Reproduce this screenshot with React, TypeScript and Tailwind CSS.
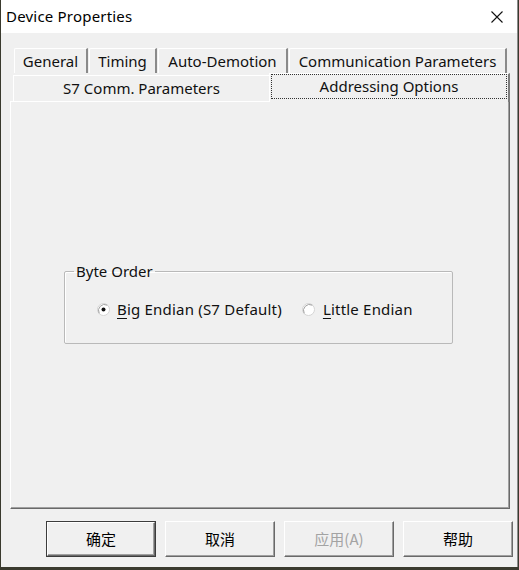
import React from 'react';

const font = { fontFamily: '"Noto Sans", "Noto Sans CJK SC", sans-serif' };
const cjk = { fontFamily: '"Noto Sans CJK SC", "Noto Sans", sans-serif' };

// classic raised 3D edge
const raised =
  'border-t border-l border-t-white border-l-white border-r border-b border-r-[#696969] border-b-[#696969] shadow-[inset_-1px_-1px_0_#a0a0a0]';

const Tab = ({ label, width, className = '' }: { label: string; width: number; className?: string }) => (
  <div
    className={`flex items-center justify-center border-t border-l border-t-white border-l-white border-r-2 border-r-[#8a8a8a] rounded-tl-[2px] ${className}`}
    style={{ width }}
  >
    {label}
  </div>
);

const Radio = ({ checked }: { checked?: boolean }) => (
  <svg width="13" height="13" viewBox="0 0 13 13" className="shrink-0">
    <circle cx="6.5" cy="6.5" r="6" fill="#ffffff" stroke="#d4d4d4" />
    <path d="M2.2 10.3 A6 6 0 0 1 10.3 2.2" fill="none" stroke="#a0a0a0" />
    {checked && <circle cx="6.5" cy="6.5" r="2" fill="#111" />}
  </svg>
);

const Button = ({ label, primary, disabled }: { label: string; primary?: boolean; disabled?: boolean }) => (
  <div
    className={`w-[110px] h-[36px] ${primary ? 'border border-[#3c3c3c] p-0' : ''}`}
  >
    <div
      className={`w-full h-full flex items-center justify-center text-[15px] ${raised} ${disabled ? 'text-[#a3a3a3]' : 'text-black'}`}
      style={cjk}
    >
      {label}
    </div>
  </div>
);

export default function App() {
  return (
    <div className="w-[519px] h-[570px] bg-[#3a3a2e] flex" style={font}>
      <div className="ml-[1px] w-[517px] h-[567px] flex flex-col border-r border-[#8c8c8c]">
        {/* Title bar */}
        <div className="h-[33px] bg-white flex items-center justify-between pl-[5px] pr-[14px]">
          <span className="text-[15px] text-black leading-none tracking-[0.2px]">Device Properties</span>
          <svg width="12" height="12" viewBox="0 0 12 12">
            <path d="M0.5 0.5 L11.5 11.5 M11.5 0.5 L0.5 11.5" stroke="#111" strokeWidth="1.1" />
          </svg>
        </div>

        {/* Body */}
        <div className="flex-1 bg-[#f0f0f0] flex flex-col text-[15px] text-[#111]">
          {/* Tab row 1 */}
          <div className="flex gap-[1px] pl-[13px] mt-[15px] h-[25px]">
            <Tab label="General" width={74} />
            <Tab label="Timing" width={68} />
            <Tab label="Auto-Demotion" width={130} />
            <Tab label="Communication Parameters" width={218} />
          </div>
          {/* Tab row 2 */}
          <div className="flex pl-[12px] h-[28px] items-end">
            <div className="w-[256px] h-[26px] flex items-center justify-center border-t border-l border-t-white border-l-white">
              S7 Comm. Parameters
            </div>
            <div className="relative z-10 w-[241px] h-[29px] -mb-[1px] px-[1px] pt-[1px] pb-[2px] bg-[#f0f0f0] border-t border-l border-t-white border-l-white border-r-2 border-r-[#7c7c7c]">
              <div className="h-full flex items-center justify-center border border-dotted border-[#333] -mt-[1px]">
                Addressing Options
              </div>
            </div>
          </div>

          {/* Panel */}
          <div className="ml-[9px] w-[500px] h-[408px] border-t border-l border-t-white border-l-white border-r border-b border-r-[#696969] border-b-[#696969] shadow-[inset_-1px_-1px_0_#a0a0a0] pt-[160px] pl-[53px]">
            <fieldset className="w-[389px] h-[82px] border border-[#b9b9b9] shadow-[inset_1px_1px_0_#ffffff] rounded-[2px] m-0 px-[10px]">
              <legend className="px-[2px] -ml-[1px] text-[15px] leading-[18px]">Byte Order</legend>
              <div className="flex items-center mt-[18px] ml-[22px] tracking-[0.2px]">
                <Radio checked />
                <span className="ml-[7px]">
                  <span className="underline underline-offset-[3px]">B</span>ig Endian (S7 Default)
                </span>
                <span className="ml-[20px]">
                  <Radio />
                </span>
                <span className="ml-[8px]">
                  <span className="underline underline-offset-[3px]">L</span>ittle Endian
                </span>
              </div>
            </fieldset>
          </div>

          {/* Buttons */}
          <div className="flex gap-[9px] pl-[45px] mt-[12px]">
            <Button label="确定" primary />
            <Button label="取消" />
            <Button label="应用(A)" disabled />
            <Button label="帮助" />
          </div>
        </div>
      </div>
    </div>
  );
}
